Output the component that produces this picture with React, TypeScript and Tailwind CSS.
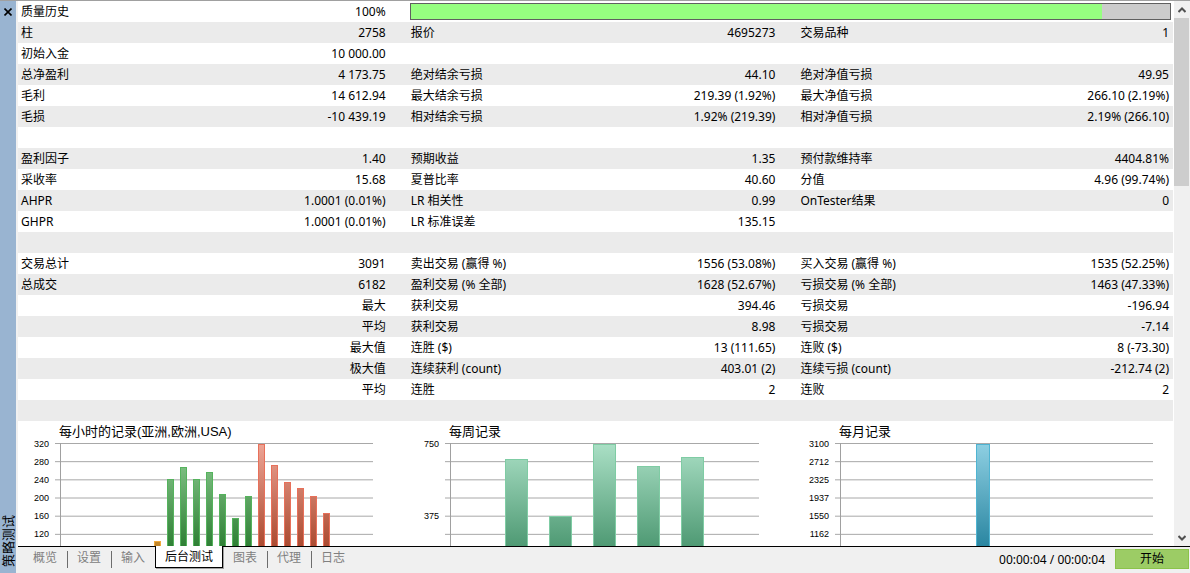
import React from "react";

type Cell = [label: string, value: string];

const rows: Cell[][] = [
  [["柱", "2758"], ["报价", "4695273"], ["交易品种", "1"]],
  [["初始入金", "10 000.00"], ["", ""], ["", ""]],
  [["总净盈利", "4 173.75"], ["绝对结余亏损", "44.10"], ["绝对净值亏损", "49.95"]],
  [["毛利", "14 612.94"], ["最大结余亏损", "219.39 (1.92%)"], ["最大净值亏损", "266.10 (2.19%)"]],
  [["毛损", "-10 439.19"], ["相对结余亏损", "1.92% (219.39)"], ["相对净值亏损", "2.19% (266.10)"]],
  [["", ""], ["", ""], ["", ""]],
  [["盈利因子", "1.40"], ["预期收益", "1.35"], ["预付款维持率", "4404.81%"]],
  [["采收率", "15.68"], ["夏普比率", "40.60"], ["分值", "4.96 (99.74%)"]],
  [["AHPR", "1.0001 (0.01%)"], ["LR 相关性", "0.99"], ["OnTester结果", "0"]],
  [["GHPR", "1.0001 (0.01%)"], ["LR 标准误差", "135.15"], ["", ""]],
  [["", ""], ["", ""], ["", ""]],
  [["交易总计", "3091"], ["卖出交易 (赢得 %)", "1556 (53.08%)"], ["买入交易 (赢得 %)", "1535 (52.25%)"]],
  [["总成交", "6182"], ["盈利交易 (% 全部)", "1628 (52.67%)"], ["亏损交易 (% 全部)", "1463 (47.33%)"]],
  [["", "最大"], ["获利交易", "394.46"], ["亏损交易", "-196.94"]],
  [["", "平均"], ["获利交易", "8.98"], ["亏损交易", "-7.14"]],
  [["", "最大值"], ["连胜 ($)", "13 (111.65)"], ["连败 ($)", "8 (-73.30)"]],
  [["", "极大值"], ["连续获利 (count)", "403.01 (2)"], ["连续亏损 (count)", "-212.74 (2)"]],
  [["", "平均"], ["连胜", "2"], ["连败", "2"]],
  [["", ""], ["", ""], ["", ""]],
];

type Bar = { x: number; top: number; color: "orange" | "green" | "red" | "mint" | "blue" };

const strokes = {
  orange: "#f0a93c",
  green: "#55b35d",
  red: "#e8705a",
  mint: "#7fcca4",
  blue: "#4fb4d2",
};

const gradients = {
  orange: ["#f5c878", "#c08428"],
  green: ["#93cf97", "#2f8035"],
  red: ["#eea596", "#ab4a30"],
  mint: ["#abe0c6", "#4f9a74"],
  blue: ["#8fd0e3", "#2a86a1"],
};

const hourBars: Bar[] = [
  { x: 136, top: 120, color: "orange" },
  { x: 149, top: 58, color: "green" },
  { x: 162, top: 46, color: "green" },
  { x: 175, top: 58, color: "green" },
  { x: 188, top: 51, color: "green" },
  { x: 201, top: 73, color: "green" },
  { x: 214, top: 97, color: "green" },
  { x: 227, top: 75, color: "green" },
  { x: 240, top: 23, color: "red" },
  { x: 253, top: 44, color: "red" },
  { x: 266, top: 61, color: "red" },
  { x: 279, top: 67, color: "red" },
  { x: 292, top: 75, color: "red" },
  { x: 305, top: 92, color: "red" },
];

const weekBars: Bar[] = [
  { x: 97, top: 38, color: "mint" },
  { x: 141, top: 95, color: "mint" },
  { x: 185, top: 23, color: "mint" },
  { x: 229, top: 45, color: "mint" },
  { x: 273, top: 36, color: "mint" },
];

const monthBars: Bar[] = [{ x: 178, top: 23, color: "blue" }];

const TOP = 22.5;
const STEP = 18.17;
const BASE = 168;

const Chart = ({
  title,
  labels,
  bars,
  barWidth,
  end,
}: {
  title: string;
  labels: string[];
  bars: Bar[];
  barWidth: number;
  end: number;
}) => {
  const used = Array.from(new Set(bars.map((b) => b.color)));
  return (
    <svg width="372" height="176" role="img" aria-label={title} className="block">
      <defs>
        {used.map((c) => (
          <linearGradient key={c} id={`fill-${c}`} gradientUnits="userSpaceOnUse" x1="0" x2="0" y1="22" y2="125">
            <stop offset="0" stopColor={gradients[c][0]} />
            <stop offset="1" stopColor={gradients[c][1]} />
          </linearGradient>
        ))}
      </defs>
      <text x="41" y="15" className="fill-black font-['Liberation_Sans','Noto_Sans_CJK_SC',sans-serif] text-[13px]">
        {title}
      </text>
      {Array.from({ length: 8 }, (_, i) => (
        <line key={i} x1="37" x2={end} y1={TOP + i * STEP} y2={TOP + i * STEP} stroke="#a8a8a8" />
      ))}
      <line x1="42.5" x2="42.5" y1="22" y2={BASE} stroke="#a0a0a0" />
      {labels.map((label, i) =>
        label ? (
          <text
            key={i}
            x="31"
            y={Math.round(TOP + i * STEP + 3)}
            textAnchor="end"
            className="fill-black font-['Liberation_Sans',sans-serif] text-[9px]"
          >
            {label}
          </text>
        ) : null
      )}
      {bars.map((b) => (
        <rect
          key={b.x}
          x={b.x + 0.5}
          y={b.top + 0.5}
          width={barWidth - 1}
          height={BASE - b.top}
          fill={`url(#fill-${b.color})`}
          stroke={strokes[b.color]}
        />
      ))}
    </svg>
  );
};

const tabs = ["概览", "设置", "输入", "后台测试", "图表", "代理", "日志"];
const activeTab = 3;

const Tab = ({ label, index }: { label: string; index: number }) => {
  if (index === activeTab) {
    return (
      <button
        role="tab"
        aria-selected
        className="-mt-px h-[22px] border-x border-b border-black bg-white px-[9px] text-black shadow-[1px_1px_0_#a0a0a0]"
      >
        {label}
      </button>
    );
  }
  const divided = index !== activeTab - 1 && index !== tabs.length - 1;
  return (
    <button role="tab" aria-selected={false} className="flex h-[21px] items-center text-[#808080]">
      <span className="px-[10px]">{label}</span>
      <span className={`-mr-px mt-1 h-[17px] w-px ${divided ? "bg-[#6d6d6d]" : ""}`} />
    </button>
  );
};

const Chevron = ({ down = false }: { down?: boolean }) => (
  <svg width="8" height="6" viewBox="0 0 8 6" className={down ? "rotate-180" : ""}>
    <path d="M0.5 5 L4 1.5 L7.5 5" fill="none" stroke="#505050" strokeWidth="2" />
  </svg>
);

const Sidebar = () => (
  <aside className="flex w-4 shrink-0 flex-col items-center justify-between bg-[#99b4d1] pt-[7px] pb-[6px]">
    <button aria-label="关闭" className="block">
      <svg width="8" height="8" viewBox="0 0 8 8" className="block">
        <path d="M0.5 0.5 L7.5 7.5 M7.5 0.5 L0.5 7.5" stroke="#000" strokeWidth="1.6" />
      </svg>
    </button>
    <span className="rotate-180 text-[13px] leading-4 [text-orientation:sideways] [writing-mode:vertical-rl]">
      策略测试
    </span>
  </aside>
);

const App = () => {
  return (
    <div className="flex h-screen overflow-hidden border-t border-[#a0a0a0] bg-[#f0f0f0] font-['Noto_Sans','Noto_Sans_CJK_SC',sans-serif] text-xs text-black">
      <Sidebar />
      <div className="flex min-w-0 flex-1 flex-col pl-[2px]">
        <div className="flex min-h-0 flex-1">
          <main className="min-w-0 flex-1 overflow-hidden bg-white">
            <table className="w-full table-fixed border-collapse leading-5">
              <colgroup>
                <col className="w-[16.87%]" />
                <col className="w-[16.87%]" />
                <col className="w-[16.87%]" />
                <col className="w-[16.87%]" />
                <col />
                <col />
              </colgroup>
              <tbody>
                <tr className="h-[21px]">
                  <th scope="row" className="p-0 pl-[3px] text-left font-normal">质量历史</th>
                  <td className="p-0 pr-[22px] text-right">100%</td>
                  <td colSpan={4} className="p-0 px-[2px]">
                    <div
                      role="progressbar"
                      aria-label="质量历史"
                      aria-valuenow={91}
                      className="h-[17px] border border-[#606060] bg-[#cccccc]"
                    >
                      <div className="h-full w-[91%] bg-[#96ff80]" />
                    </div>
                  </td>
                </tr>
                {rows.map((row, i) => (
                  <tr key={i} className="h-[21px] odd:bg-white even:bg-[#ebebeb]">
                    {row.map(([label, value], j) => (
                      <React.Fragment key={j}>
                        <th scope="row" className="p-0 pl-[3px] text-left font-normal whitespace-nowrap">
                          {label}
                        </th>
                        <td className={`p-0 text-right whitespace-nowrap ${j === 2 ? "pr-1" : "pr-[22px]"}`}>
                          {value}
                        </td>
                      </React.Fragment>
                    ))}
                  </tr>
                ))}
              </tbody>
            </table>
            <div className="grid grid-cols-[33.75%_33.75%_1fr]">
              <Chart
                title="每小时的记录(亚洲,欧洲,USA)"
                labels={["320", "280", "240", "200", "160", "120"]}
                bars={hourBars}
                barWidth={7}
                end={355}
              />
              <Chart title="每周记录" labels={["750", "", "", "", "375"]} bars={weekBars} barWidth={23} end={351} />
              <Chart
                title="每月记录"
                labels={["3100", "2712", "2325", "1937", "1550", "1162"]}
                bars={monthBars}
                barWidth={14}
                end={355}
              />
            </div>
          </main>
          <div className="flex w-[17px] shrink-0 flex-col items-center border-l border-white pr-px">
            <button aria-label="向上" className="flex h-[17px] shrink-0 items-center">
              <Chevron />
            </button>
            <div className="h-[168px] w-full bg-[#cdcdcd]" />
            <button aria-label="向下" className="mt-auto flex h-[17px] shrink-0 items-center">
              <Chevron down />
            </button>
          </div>
        </div>
        <footer className="flex h-[27px] shrink-0 items-start border-t border-black pl-[5px]">
          <div role="tablist" className="flex items-start">
            {tabs.map((t, i) => (
              <Tab key={t} label={t} index={i} />
            ))}
          </div>
          <div className="ml-auto flex items-center pt-[2px] pr-px">
            <span className="mr-[10px] pt-px">00:00:04 / 00:00:04</span>
            <button className="h-5 w-[74px] border border-[#8bc34a] bg-[#9ccc65] leading-4">开始</button>
          </div>
        </footer>
      </div>
    </div>
  );
};

export default App;
